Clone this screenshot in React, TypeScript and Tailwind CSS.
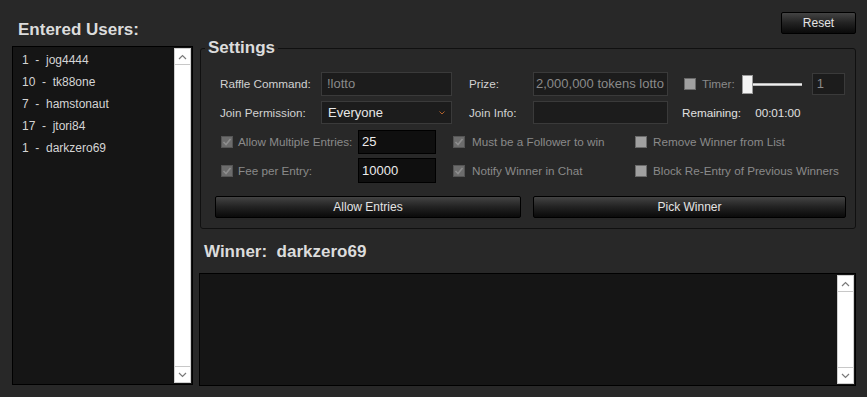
import React from 'react'

const USERS = [
  { count: 1, name: 'jog4444' },
  { count: 10, name: 'tk88one' },
  { count: 7, name: 'hamstonaut' },
  { count: 17, name: 'jtori84' },
  { count: 1, name: 'darkzero69' },
]

const FONT = { fontFamily: '"Liberation Sans", Arial, sans-serif' }

function Chevron({ up }: { up?: boolean }) {
  return (
    <svg width="9" height="6" viewBox="0 0 9 6" className="block">
      <path d={up ? 'M1 5 L4.5 1.5 L8 5' : 'M1 1 L4.5 4.5 L8 1'} fill="none" stroke="#7a7a7a" strokeWidth="1.2" />
    </svg>
  )
}

function ScrollBar() {
  return (
    <div className="w-[17px] h-full bg-white border border-[#d0d0d0] flex flex-col">
      <div className="h-[16px] border-b border-[#c8c8c8] flex items-center justify-center">
        <Chevron up />
      </div>
      <div className="flex-1" />
      <div className="h-[16px] border-t border-[#c8c8c8] flex items-center justify-center">
        <Chevron />
      </div>
    </div>
  )
}

function CheckBox({ checked }: { checked?: boolean }) {
  return checked ? (
    <div className="w-[12px] h-[12px] bg-[#6c6c6c] border border-[#555] flex items-center justify-center shrink-0">
      <svg width="10" height="10" viewBox="0 0 10 10">
        <path d="M1.5 5 L4 7.5 L8.5 2" fill="none" stroke="#8e8e8e" strokeWidth="1.6" />
      </svg>
    </div>
  ) : (
    <div className="w-[12px] h-[12px] bg-[#a0a0a0] border border-[#6a6a6a] shrink-0" />
  )
}

function GlossButton({ label, w }: { label: string; w: string }) {
  return (
    <button
      className={`${w} h-[22px] border border-black rounded-[2px] bg-gradient-to-b from-[#444] via-[#222] to-[#0a0a0a] text-[#e4e4e4] text-[12px] flex items-center justify-center`}
    >
      {label}
    </button>
  )
}

export default function App() {
  return (
    <div className="w-[867px] h-[397px] bg-[#282828] flex px-[12px] overflow-hidden" style={FONT}>
      {/* Entered users */}
      <div className="w-[181px] flex flex-col shrink-0">
        <div className="h-[46px] flex items-end pb-[6px] pl-[6px]">
          <span className="text-[17px] font-bold text-[#dcdcdc] leading-[20px]">Entered Users:</span>
        </div>
        <div className="h-[339px] bg-[#151515] border border-black flex p-[1px]">
          <div className="flex-1 pt-[1px] pl-[8px]">
            {USERS.map((u, i) => (
              <div key={i} className="h-[22px] flex items-center text-[12px] text-[#d4d4d4] whitespace-pre">
                {`${u.count}  -  ${u.name}`}
              </div>
            ))}
          </div>
          <ScrollBar />
        </div>
      </div>

      {/* Right side */}
      <div className="ml-[6px] w-[657px] flex flex-col">
        <div className="h-[38px] flex justify-end pt-[12px]">
          <GlossButton label="Reset" w="w-[75px]" />
        </div>

        <fieldset className="ml-[1px] w-[656px] h-[191px] border border-[#101010] rounded-[3px] pl-[14px] pr-[8px]">
          <legend className="-ml-[10px] px-[3px] text-[17px] font-bold text-[#dcdcdc] leading-[20px]">Settings</legend>

          <div className="flex flex-col text-[11.7px] text-[#d2d2d2]">
            {/* row 1 */}
            <div className="flex items-center h-[24px] mt-[14px] ml-[5px]">
              <span className="w-[101px]">Raffle Command:</span>
              <div className="w-[131px] h-[24px] bg-[#1c1c1c] border border-[#3a3a3a] px-[5px] flex items-center text-[#8a8a8a] text-[13px]">!lotto</div>
              <span className="w-[64px] ml-[17px]">Prize:</span>
              <div className="w-[135px] h-[24px] bg-[#1c1c1c] border border-[#3a3a3a] px-[2px] flex items-center text-[#8a8a8a] text-[13px] whitespace-nowrap overflow-hidden">2,000,000 tokens lotto</div>
              <div className="ml-[16px]"><CheckBox /></div>
              <span className="ml-[6px] text-[#8a8a8a]">Timer:</span>
              <div className="ml-[7px] w-[60px] h-[20px] relative flex items-center">
                <div className="absolute left-[8px] right-0 h-[3px] bg-[#f0f0f0] border-y border-[#bbb]" />
                <div className="relative w-[11px] h-[19px] bg-[#f4f4f4] border border-[#999]" />
              </div>
              <div className="ml-[10px] w-[33px] h-[22px] bg-[#1c1c1c] border border-[#3a3a3a] px-[4px] flex items-center text-[#8a8a8a] text-[13px]">1</div>
            </div>

            {/* row 2 */}
            <div className="flex items-center h-[23px] mt-[5px] ml-[5px]">
              <span className="w-[101px]">Join Permission:</span>
              <div className="w-[131px] h-[23px] bg-[#1c1c1c] border border-[#3a3a3a] pl-[6px] pr-[6px] flex items-center justify-between text-[#e8e8e8] text-[13px]">
                <span>Everyone</span>
                <svg width="6" height="4" viewBox="0 0 6 4"><path d="M0.5 0.5 L3 3 L5.5 0.5" fill="none" stroke="#b0602a" strokeWidth="1" /></svg>
              </div>
              <span className="w-[64px] ml-[17px]">Join Info:</span>
              <div className="w-[135px] h-[23px] bg-[#1c1c1c] border border-[#3a3a3a]" />
              <span className="ml-[14px] text-[#e0e0e0]">Remaining:</span>
              <span className="ml-[14px] text-[#e0e0e0]">00:01:00</span>
            </div>

            {/* row 3 */}
            <div className="flex items-center h-[24px] mt-[6px] ml-[6px]">
              <CheckBox checked />
              <span className="ml-[5px] w-[120px] text-[#8a8a8a] whitespace-nowrap">Allow Multiple Entries:</span>
              <div className="w-[78px] h-[24px] bg-[#0f0f0f] border border-[#000] px-[3px] flex items-center text-[#ececec] text-[13px]">25</div>
              <div className="ml-[17px]"><CheckBox checked /></div>
              <span className="ml-[7px] w-[163px] text-[#8a8a8a]">Must be a Follower to win</span>
              <CheckBox />
              <span className="ml-[6px] text-[#8a8a8a]">Remove Winner from List</span>
            </div>

            {/* row 4 */}
            <div className="flex items-center h-[25px] mt-[4px] ml-[6px]">
              <CheckBox checked />
              <span className="ml-[5px] w-[120px] text-[#8a8a8a]">Fee per Entry:</span>
              <div className="w-[78px] h-[25px] bg-[#0f0f0f] border border-[#000] px-[3px] flex items-center text-[#ececec] text-[13px]">10000</div>
              <div className="ml-[17px]"><CheckBox checked /></div>
              <span className="ml-[7px] w-[163px] text-[#8a8a8a]">Notify Winner in Chat</span>
              <CheckBox />
              <span className="ml-[6px] text-[#8a8a8a] whitespace-nowrap">Block Re-Entry of Previous Winners</span>
            </div>

            {/* buttons */}
            <div className="flex items-center mt-[13px] gap-[12px]">
              <GlossButton label="Allow Entries" w="w-[306px]" />
              <GlossButton label="Pick Winner" w="w-[313px]" />
            </div>
          </div>
        </fieldset>

        <div className="h-[44px] flex items-center pl-[5px] pt-[1px]">
          <span className="text-[17px] font-bold text-[#dcdcdc] whitespace-pre">Winner:  darkzero69</span>
        </div>

        <div className="w-[657px] h-[113px] bg-[#151515] border border-black flex justify-end p-[1px]">
          <ScrollBar />
        </div>
      </div>
    </div>
  )
}
